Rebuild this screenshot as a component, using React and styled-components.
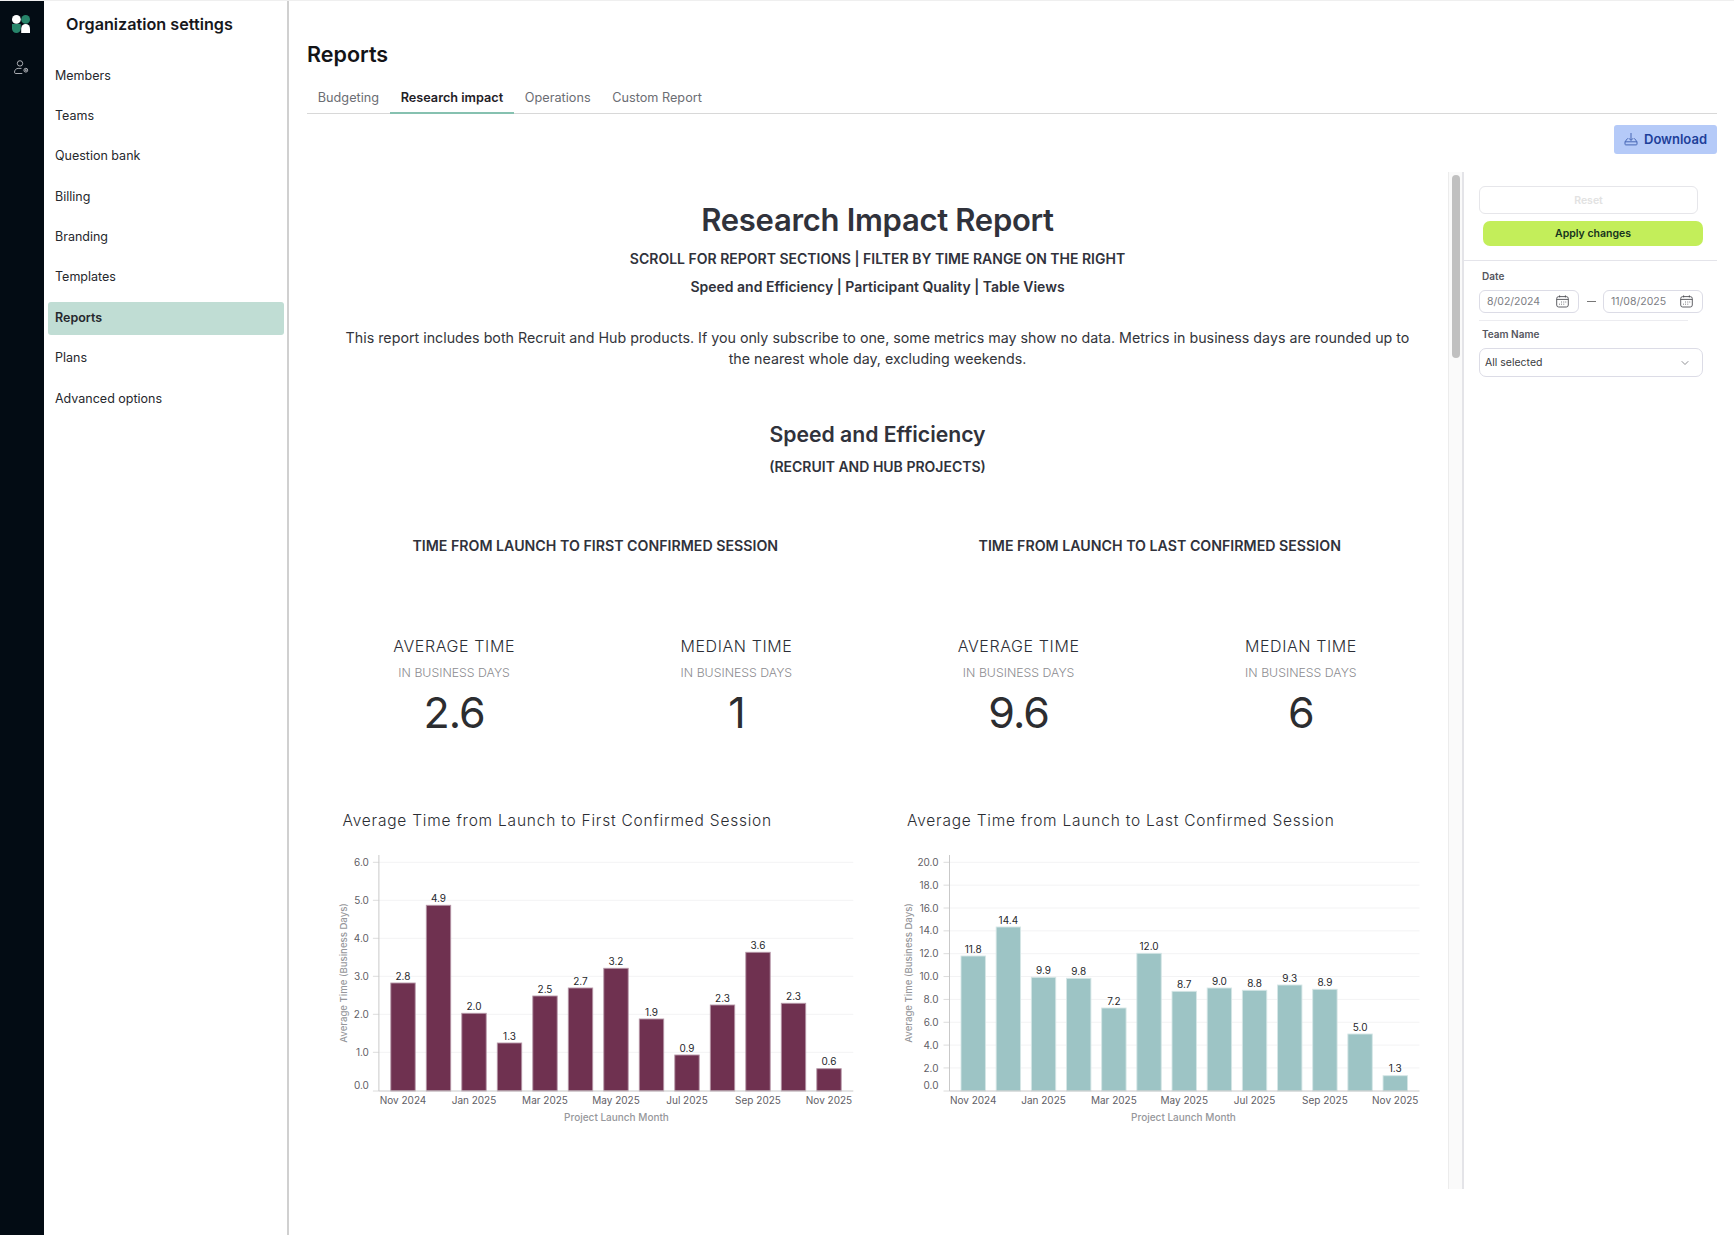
import React from "react";
import styled, { createGlobalStyle } from "styled-components";
import { ChevronDown } from "lucide-react";

const Global = createGlobalStyle`
  html, body { margin: 0; padding: 0; background: #fff; }
  body { font-family: Inter, "Liberation Sans", sans-serif; color: #2b2d33; }
  * { box-sizing: border-box; }
`;

const Shell = styled.div`
  display: flex;
  width: 1734px;
  height: 1235px;
  overflow: hidden;
  border-top: 1px solid #efefef;
`;
const Rail = styled.aside`
  width: 44px;
  margin-top: -1px;
  background: #030c14;
  display: flex;
  flex-direction: column;
  align-items: center;
  padding: 15px 2px 0 0;
  gap: 27px;
  flex: none;
`;
const Sidebar = styled.nav`
  width: 245px;
  flex: none;
  border-right: 2px solid #d0d0d0;
  padding: 0 3px 0 4px;
`;
const SideTitle = styled.h2`
  margin: 12px 0 24.5px 18px;
  font-size: 16.2px;
  line-height: 22px;
  font-weight: 600;
  color: #17181c;
`;
const NavList = styled.div`
  display: flex;
  flex-direction: column;
  gap: 7.4px;
`;
const NavItem = styled.div`
  height: 33px;
  line-height: 32px;
  padding-left: 7px;
  font-size: 12.5px;
  border-radius: 3px;
  color: #26282d;
  font-weight: ${(p) => (p.$active ? 600 : 400)};
  background: ${(p) => (p.$active ? "#c0ddd4" : "transparent")};
`;
const Main = styled.main`
  flex: 1;
  min-width: 0;
  padding: 0 17px 0 18px;
`;
const PageTitle = styled.h1`
  margin: 40px 0 17px;
  font-size: 21.5px;
  line-height: 26px;
  font-weight: 600;
  color: #131417;
`;
const Tabs = styled.div`
  display: flex;
  border-bottom: 1px solid #d8d8d8;
  height: 30px;
`;
const Tab = styled.div`
  padding: 0 10.8px;
  height: 30px;
  line-height: ${(p) => (p.$active ? 27 : 28)}px;
  font-size: 12.7px;
  color: ${(p) => (p.$active ? "#1f2126" : "#6b6d73")};
  font-weight: ${(p) => (p.$active ? 600 : 400)};
  border-bottom: 2px solid ${(p) => (p.$active ? "#86c1b0" : "transparent")};
`;
const Toolbar = styled.div`
  display: flex;
  justify-content: flex-end;
  margin-top: 11px;
  height: 29px;
`;
const DownloadBtn = styled.button`
  display: flex;
  align-items: center;
  justify-content: center;
  gap: 6px;
  width: 103px;
  height: 29px;
  padding: 0 0 2px;
  border: 0;
  border-radius: 3px;
  background: #b5caf8;
  color: #1d3f9a;
  font: 600 13px Inter, sans-serif;
`;
const Body = styled.div`
  display: flex;
  margin-top: 18px;
  height: 1017px;
`;
const Report = styled.div`
  flex: 1;
  min-width: 0;
  padding: 31px 6px 0;
`;
const Track = styled.div`
  width: 16px;
  flex: none;
  background: #fafafa;
  border-left: 1px solid #ececec;
  border-right: 2px solid #e4e4e8;
  padding: 3px 3px 0 3px;
`;
const Thumb = styled.div`
  width: 8px;
  height: 183px;
  border-radius: 4px;
  background: #c0c0c0;
`;
const Filters = styled.aside`
  width: 253px;
  flex: none;
`;
const FilterActions = styled.div`
  padding: 14px 14px 14px 15px;
  border-bottom: 1px solid #e4e4ea;
`;
const ResetBtn = styled.button`
  display: block;
  width: 219px;
  height: 28px;
  border: 1px solid #e6e6ea;
  border-radius: 6px;
  background: #fff;
  color: #e2e2e2;
  font: 600 10.5px Inter, sans-serif;
`;
const ApplyBtn = styled.button`
  display: block;
  margin: 7px 0 0 4px;
  width: 220px;
  height: 25px;
  border: 0;
  border-radius: 7px;
  background: #c3ee5a;
  color: #16331d;
  font: 600 10.5px Inter, sans-serif;
`;
const FilterBody = styled.div`
  padding: 0 14px 0 15px;
`;
const FieldLabel = styled.div`
  font-size: 10px;
  line-height: 12px;
  font-weight: 600;
  color: #55565e;
  margin: ${(p) => p.$m};
`;
const DateRow = styled.div`
  display: flex;
  align-items: center;
  gap: 0;
  justify-content: space-between;
  width: 224px;
`;
const DateBox = styled.div`
  display: flex;
  align-items: center;
  justify-content: space-between;
  width: 100px;
  height: 23px;
  padding: 0 9px 0 7px;
  border: 1px solid #dcdce6;
  border-radius: 6px;
  font-size: 10.5px;
  color: #7c7d83;
`;
const Dash = styled.span`
  width: 9px;
  height: 1px;
  background: #777;
`;
const Rule = styled.div`
  width: 209px;
  height: 1px;
  background: #ececf0;
  margin-top: 7px;
`;
const SelectBox = styled.div`
  display: flex;
  align-items: center;
  justify-content: space-between;
  width: 224px;
  height: 29px;
  padding: 0 11px 0 5px;
  border: 1px solid #dcdce6;
  border-radius: 7px;
  font-size: 10.5px;
  color: #3a3b40;
`;

const ReportTitle = styled.h1`
  margin: 0;
  text-align: center;
  font-size: 31px;
  line-height: 33px;
  font-weight: 600;
  letter-spacing: -0.3px;
  color: #30323b;
`;
const SubLine = styled.div`
  text-align: center;
  font-size: 14px;
  line-height: 28px;
  font-weight: 600;
  color: #30323b;
  margin-top: ${(p) => p.$mt || 0}px;
`;
const Intro = styled.p`
  width: 1080px;
  margin: 26px auto 0;
  text-align: center;
  font-size: 14.26px;
  line-height: 21px;
  color: #33353b;
`;
const SectionTitle = styled.h2`
  margin: 51px 0 0;
  text-align: center;
  font-size: 21.2px;
  line-height: 28px;
  font-weight: 600;
  color: #30323b;
`;
const TwoCols = styled.div`
  display: grid;
  grid-template-columns: 1fr 1fr;
`;
const ColHead = styled.h3`
  margin: 0;
  text-align: center;
  font-size: 14.2px;
  line-height: 20px;
  font-weight: 600;
  color: #30323b;
`;
const Heads = styled(TwoCols)`
  margin-top: 55px;
`;
const Stats = styled.div`
  display: grid;
  grid-template-columns: repeat(4, 1fr);
  margin-top: 80px;
`;
const Stat = styled.div`
  text-align: center;
`;
const StatName = styled.div`
  font-size: 16px;
  line-height: 20px;
  font-weight: 300;
  letter-spacing: 0.6px;
  color: #2c2e36;
`;
const StatSub = styled.div`
  margin-top: 9px;
  font-size: 12.3px;
  line-height: 16px;
  font-weight: 300;
  color: #8c8c90;
`;
const StatValue = styled.div`
  margin-top: 4px;
  font-size: 43px;
  line-height: 54px;
  font-weight: 400;
  letter-spacing: -1px;
  color: #2c2d30;
`;
const Charts = styled(TwoCols)`
  margin-top: 72px;
`;
const ChartCol = styled.div``;
const ChartTitle = styled.div`
  padding-left: 29.5px;
  font-size: 15.5px;
  line-height: 20px;
  font-weight: 300;
  letter-spacing: 0.78px;
  color: #2b2d33;
`;
const ChartSvg = styled.svg`
  display: block;
  margin-top: 9px;
  font-family: Inter, sans-serif;
`;

const Logo = () => (
  <svg width="18" height="18" viewBox="0 0 18 18">
    <circle cx="4.4" cy="4.4" r="4.4" fill="#fff" />
    <circle cx="13.6" cy="4.4" r="4.4" fill="#27856a" />
    <path d="M0 9h8.8v4.6a4.4 4.4 0 0 1-8.8 0z" fill="#27856a" />
    <path d="M9.2 18v-4.6a4.4 4.4 0 0 1 8.8 0V18z" fill="#fff" />
  </svg>
);
const UserGear = () => (
  <svg width="15" height="15" viewBox="0 0 15 15" fill="none" stroke="#d4d6da" strokeWidth="0.8">
    <circle cx="6" cy="3.4" r="2.7" />
    <path d="M7.5 8.4H4.2C2 8.4.5 10.2.5 12.2c0 .9.5 1.3 1.2 1.3h6.6" />
    <circle cx="11.8" cy="10.2" r="1.9" />
    <circle cx="11.8" cy="10.2" r="0.6" />
  </svg>
);
const DownloadIcon = () => (
  <svg width="14" height="14" viewBox="0 0 14 14" fill="none" stroke="#4667b5" strokeWidth="1">
    <path d="M7 1v7.4M4.8 6.2 7 8.4l2.2-2.2" />
    <path d="M3.6 6.4 1 9.8v2.4c0 .4.3.7.7.7h10.6c.4 0 .7-.3.7-.7V9.8l-2.6-3.4M1 9.8h12" />
  </svg>
);
const CalendarIcon = () => (
  <svg width="13" height="13" viewBox="0 0 13 13" fill="none" stroke="#4e4f55" strokeWidth="0.9">
    <rect x="0.7" y="1.6" width="11.6" height="10.4" rx="2" />
    <path d="M0.7 4.4h11.6M3.6.4v2M9.4.4v2" />
    <path d="M5.2 7h.8M7.4 7h.8M9.4 7h.8M5.2 9.2h.8M7.4 9.2h.8M3 9.2h.8" />
  </svg>
);

const FIRST = {
  axisX: 65.9,
  firstCenter: 90,
  step: 35.5,
  endX: 540.3,
  labelGap: 10,
  fill: "#6f3150",
  stroke: "#b596a6",
  ticks: [0, 1, 2, 3, 4, 5, 6].map((v) => ({ label: v.toFixed(1), y: 250.3 - v * 38 })),
  yTitleX: 34,
  xTitleX: 303.5,
  bars: [
    ["2.8", 108], ["4.9", 185.7], ["2.0", 77.7], ["1.3", 48], ["2.5", 95],
    ["2.7", 103], ["3.2", 122.7], ["1.9", 72], ["0.9", 36], ["2.3", 86],
    ["3.6", 138.7], ["2.3", 87.7], ["0.6", 22.3],
  ],
};
const LAST = {
  axisX: 71.5,
  firstCenter: 95.2,
  step: 35.17,
  endX: 541.5,
  labelGap: 11,
  fill: "#9dc4c5",
  stroke: "#d5e6e6",
  ticks: [0, 2, 4, 6, 8, 10, 12, 14, 16, 18, 20].map((v) => ({
    label: v.toFixed(1),
    y: 250.8 - v * 11.425,
  })),
  yTitleX: 34,
  xTitleX: 305.5,
  bars: [
    ["11.8", 135], ["14.4", 164], ["9.9", 113.7], ["9.8", 112.7], ["7.2", 83],
    ["12.0", 137.7], ["8.7", 99.7], ["9.0", 103], ["8.8", 100.7], ["9.3", 106],
    ["8.9", 101.7], ["5.0", 57], ["1.3", 15.3],
  ],
};
const MONTHS = ["Nov 2024", "Jan 2025", "Mar 2025", "May 2025", "Jul 2025", "Sep 2025", "Nov 2025"];
const BASE = 251;

const BarChart = ({ data }) => {
  const { axisX, firstCenter, step, endX, labelGap, fill, stroke, ticks, bars, yTitleX, xTitleX } = data;
  return (
    <ChartSvg width="564" height="290" viewBox="0 0 564 290">
      {ticks.map((t, i) => (
        <g key={t.label}>
          {i > 0 && <line x1={axisX} x2={endX} y1={t.y} y2={t.y} stroke="#f3f3f4" />}
          <line x1={axisX - 6} x2={axisX} y1={i === 0 ? BASE : t.y} y2={i === 0 ? BASE : t.y} stroke="#dcdcdc" />
          <text x={axisX - labelGap} y={(i === 0 ? t.y - 5 : t.y) + 3.6} textAnchor="end" fontSize="10" fill="#5f6066">
            {t.label}
          </text>
        </g>
      ))}
      {bars.map(([label, h], i) => {
        const cx = firstCenter + i * step;
        return (
          <g key={i}>
            <rect x={cx - 12.2} y={BASE - h} width="24.4" height={h} fill={fill} stroke={stroke} strokeWidth="0.9" />
            <text x={cx} y={BASE - h - 3.5} textAnchor="middle" fontSize="10" fill="#26272b">
              {label}
            </text>
          </g>
        );
      })}
      <line x1={axisX} x2={axisX} y1="15" y2={BASE} stroke="#c9c9c9" />
      <line x1={axisX} x2={endX} y1={BASE} y2={BASE} stroke="#c9c9c9" />
      {MONTHS.map((m, i) => (
        <text key={m} x={firstCenter + i * 2 * step} y="264" textAnchor="middle" fontSize="10" fill="#5f6066">
          {m}
        </text>
      ))}
      <text x={xTitleX} y="281" textAnchor="middle" fontSize="10" fontWeight="500" fill="#96979b">
        Project Launch Month
      </text>
      <text
        transform={`translate(${yTitleX} 133) rotate(-90)`}
        textAnchor="middle"
        fontSize="9.6"
        fontWeight="500"
        fill="#96979b"
      >
        Average Time (Business Days)
      </text>
    </ChartSvg>
  );
};

const NAV = ["Members", "Teams", "Question bank", "Billing", "Branding", "Templates", "Reports", "Plans", "Advanced options"];
const STATS = [
  ["AVERAGE TIME", "2.6"],
  ["MEDIAN TIME", "1"],
  ["AVERAGE TIME", "9.6"],
  ["MEDIAN TIME", "6"],
];

export default function App() {
  return (
    <>
      <Global />
      <Shell>
        <Rail>
          <Logo />
          <UserGear />
        </Rail>
        <Sidebar>
          <SideTitle>Organization settings</SideTitle>
          <NavList>
            {NAV.map((n) => (
              <NavItem key={n} $active={n === "Reports"}>{n}</NavItem>
            ))}
          </NavList>
        </Sidebar>
        <Main>
          <PageTitle>Reports</PageTitle>
          <Tabs>
            <Tab>Budgeting</Tab>
            <Tab $active>Research impact</Tab>
            <Tab>Operations</Tab>
            <Tab>Custom Report</Tab>
          </Tabs>
          <Toolbar>
            <DownloadBtn>
              <DownloadIcon />
              Download
            </DownloadBtn>
          </Toolbar>
          <Body>
            <Report>
              <ReportTitle>Research Impact Report</ReportTitle>
              <SubLine $mt={9}>SCROLL FOR REPORT SECTIONS | FILTER BY TIME RANGE ON THE RIGHT</SubLine>
              <SubLine>Speed and Efficiency | Participant Quality | Table Views</SubLine>
              <Intro>
                This report includes both Recruit and Hub products. If you only subscribe to one, some metrics may show no data. Metrics in business days are rounded up to the nearest whole day, excluding weekends.
              </Intro>
              <SectionTitle>Speed and Efficiency</SectionTitle>
              <SubLine $mt={5}>(RECRUIT AND HUB PROJECTS)</SubLine>
              <Heads>
                <ColHead>TIME FROM LAUNCH TO FIRST CONFIRMED SESSION</ColHead>
                <ColHead>TIME FROM LAUNCH TO LAST CONFIRMED SESSION</ColHead>
              </Heads>
              <Stats>
                {STATS.map(([n, v], i) => (
                  <Stat key={i}>
                    <StatName>{n}</StatName>
                    <StatSub>IN BUSINESS DAYS</StatSub>
                    <StatValue>{v}</StatValue>
                  </Stat>
                ))}
              </Stats>
              <Charts>
                <ChartCol>
                  <ChartTitle>Average Time from Launch to First Confirmed Session</ChartTitle>
                  <BarChart data={FIRST} />
                </ChartCol>
                <ChartCol>
                  <ChartTitle>Average Time from Launch to Last Confirmed Session</ChartTitle>
                  <BarChart data={LAST} />
                </ChartCol>
              </Charts>
            </Report>
            <Track>
              <Thumb />
            </Track>
            <Filters>
              <FilterActions>
                <ResetBtn>Reset</ResetBtn>
                <ApplyBtn>Apply changes</ApplyBtn>
              </FilterActions>
              <FilterBody>
                <FieldLabel $m="9px 0 8px 3px">Date</FieldLabel>
                <DateRow>
                  <DateBox>8/02/2024<CalendarIcon /></DateBox>
                  <Dash />
                  <DateBox>11/08/2025<CalendarIcon /></DateBox>
                </DateRow>
                <Rule />
                <FieldLabel $m="7px 0 8px 3px">Team Name</FieldLabel>
                <SelectBox>
                  All selected
                  <ChevronDown size={12} color="#6a6b70" strokeWidth={1.5} />
                </SelectBox>
              </FilterBody>
            </Filters>
          </Body>
        </Main>
      </Shell>
    </>
  );
}
